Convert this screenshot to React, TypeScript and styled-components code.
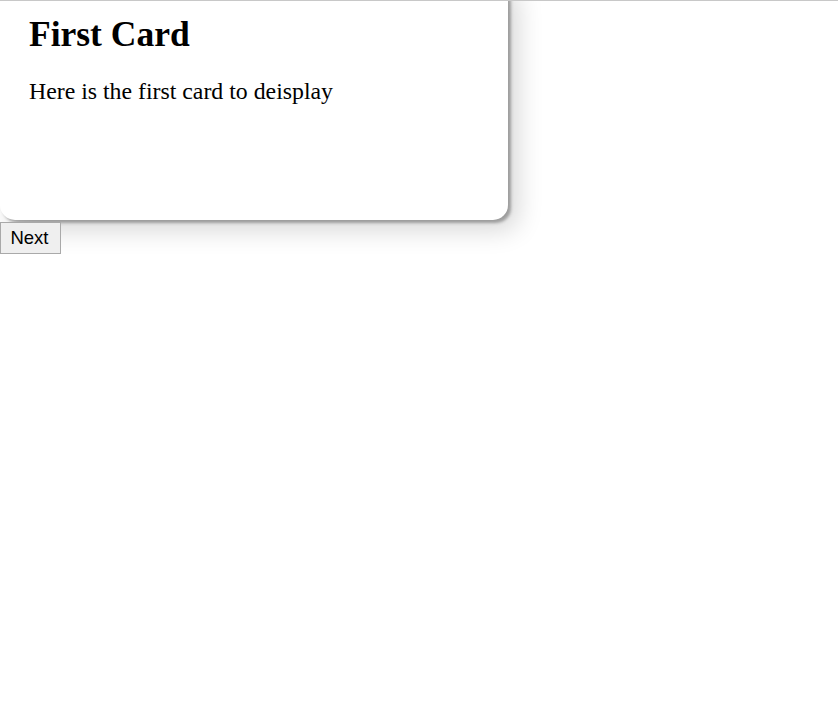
import React, { useState } from "react";
import styled, { createGlobalStyle } from "styled-components";

const Global = createGlobalStyle`
  html, body { margin: 0; padding: 0; background: #fff; }
  body { font-family: "Liberation Serif", "Times New Roman", serif; }
`;

const Frame = styled.div`
  border-top: 1px solid #c8c8c8;
  overflow: hidden;
  padding-bottom: 60px;
`;

const Card = styled.section`
  width: 479px;
  height: 240px;
  margin-top: -21px;
  padding: 0 0 0 29px;
  background: #fff;
  border-radius: 15px;
  box-shadow: 3px 3px 3px rgba(0, 0, 0, 0.3), 10px 10px 26px rgba(0, 0, 0, 0.16);
  display: flex;
  flex-direction: column;
  box-sizing: content-box;
`;

const Title = styled.h1`
  margin: 33px 0 0;
  font-size: 35.5px;
  font-weight: bold;
  line-height: 42px;
  color: #000;
`;

const Body = styled.p`
  margin: 22px 0 0;
  font-size: 23.8px;
  line-height: 28px;
  color: #000;
`;

const Button = styled.button`
  display: block;
  margin-top: 2px;
  width: 61px;
  height: 32px;
  padding: 0 2px 0 0;
  font-family: "Liberation Sans", Arial, sans-serif;
  font-size: 18.5px;
  color: #000;
  background: #efefef;
  border: 1px solid #a9a9a9;
  border-radius: 0;
`;

const cards = [
  { title: "First Card", body: "Here is the first card to deisplay" },
  { title: "Second Card", body: "Here is the second card to display" },
];

export default function App() {
  const [i, setI] = useState(0);
  const c = cards[i];
  return (
    <>
      <Global />
      <Frame>
        <Card>
          <Title>{c.title}</Title>
          <Body>{c.body}</Body>
        </Card>
        <Button onClick={() => setI((i + 1) % cards.length)}>Next</Button>
      </Frame>
    </>
  );
}
